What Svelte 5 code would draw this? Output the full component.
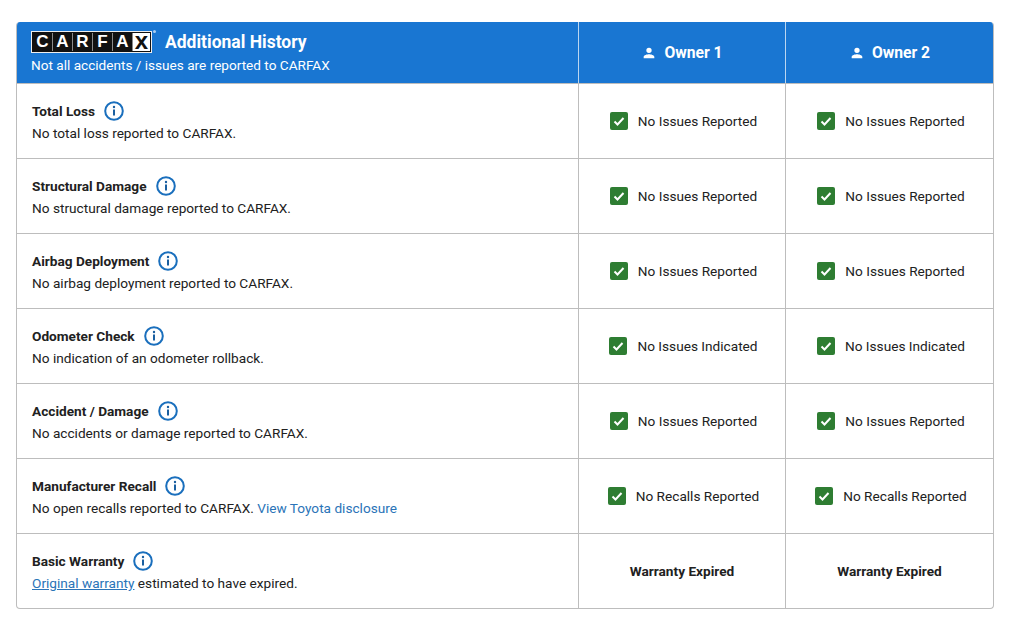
<script>
  const owners = ['Owner 1', 'Owner 2'];
  const rows = [
    { title: 'Total Loss', desc: 'No total loss reported to CARFAX.', status: 'No Issues Reported' },
    { title: 'Structural Damage', desc: 'No structural damage reported to CARFAX.', status: 'No Issues Reported' },
    { title: 'Airbag Deployment', desc: 'No airbag deployment reported to CARFAX.', status: 'No Issues Reported' },
    { title: 'Odometer Check', desc: 'No indication of an odometer rollback.', status: 'No Issues Indicated' },
    { title: 'Accident / Damage', desc: 'No accidents or damage reported to CARFAX.', status: 'No Issues Reported' },
    { title: 'Manufacturer Recall', desc: 'No open recalls reported to CARFAX. ', link: 'View Toyota disclosure', status: 'No Recalls Reported' },
    { title: 'Basic Warranty', lead: 'Original warranty', desc: ' estimated to have expired.', plain: 'Warranty Expired' }
  ];
  const letters = ['C', 'A', 'R', 'F', 'A'];
</script>

<div class="page">
  <div class="table">
    <div class="head first">
      <div class="brand">
        <div class="logo">
          {#each letters as l}<span class="cell">{l}</span>{/each}<span class="x">x</span>
          <i class="reg"></i>
        </div>
        <span class="heading">Additional History</span>
      </div>
      <div class="note">Not all accidents / issues are reported to CARFAX</div>
    </div>
    {#each owners as o}
      <div class="head owner">
        <svg viewBox="0 0 24 24" width="16" height="16" aria-hidden="true"><path fill="#fff" d="M12 12a4 4 0 1 0 0-8 4 4 0 0 0 0 8zm0 2c-2.700 0-8 1.300-8 4v2h16v-2c0-2.700-5.300-4-8-4z"/></svg>
        <span>{o}</span>
      </div>
    {/each}

    {#each rows as r}
      <div class="cellc info">
        <div class="title">
          <span>{r.title}</span>
          <svg viewBox="0 0 20 20" width="20" height="20" aria-hidden="true"><circle cx="10" cy="10" r="8.800" fill="none" stroke="#1a6fbd" stroke-width="2"/><circle cx="10" cy="6" r="1.200" fill="#1a5fa0"/><rect x="9" y="8.500" width="2" height="6" fill="#1a5fa0"/></svg>
        </div>
        <div class="desc">{#if r.lead}<a href="#w" class="under">{r.lead}</a>{/if}{r.desc}{#if r.link}<a href="#d">{r.link}</a>{/if}</div>
      </div>
      {#each owners as _}
        <div class="cellc stat">
          {#if r.plain}
            <strong>{r.plain}</strong>
          {:else}
            <svg class="check" viewBox="0 0 18 18" width="18" height="18" aria-hidden="true"><rect width="18" height="18" rx="2" fill="#2e7d32"/><path d="M4.500 9.500l3 3 6-6.500" fill="none" stroke="#fff" stroke-width="2"/></svg>
            <span>{r.status}</span>
          {/if}
        </div>
      {/each}
    {/each}
  </div>
</div>

<style>
  :global(body) { margin: 0; background: #fff; }
  .page { padding: 22px 30px 0 16px; font-family: Roboto, "Liberation Sans", sans-serif; color: #212121; }
  .table {
    width: 978px; box-sizing: border-box; display: grid;
    grid-template-columns: 561px 207px 208px;
    grid-template-rows: 61px repeat(7, 75px);
    border: 1px solid #bdbdbd; border-top: 0; border-radius: 4px; overflow: hidden;
  }
  .head { background: #1976d2; color: #fff; box-sizing: border-box; }
  .head.first { padding: 8px 0 0 15px; margin-left: -1px; }
  .brand { display: flex; align-items: center; gap: 13px; height: 24px; }
  .logo {
    position: relative; display: flex; align-items: stretch; box-sizing: border-box;
    width: 121px; height: 22px; background: #111; border: 1px solid #eee; padding: 1px;
  }
  .cell {
    width: 20px; box-sizing: border-box; border-right: 1px solid #8a8a8a; color: #fff;
    font: 700 17px/18px "Liberation Sans", sans-serif; text-align: center;
  }
  .x { flex: 1; background: #fff; color: #111; font: 700 24px/16px "Liberation Sans", sans-serif; text-align: center; }
  .reg { position: absolute; right: -5px; top: -2px; width: 3px; height: 3px; border-radius: 50%; background: #a9cdf0; }
  .heading { font-size: 17.500px; font-weight: 700; line-height: 24px; }
  .note { font-size: 13.600px; line-height: 20px; margin-top: 1px; }
  .owner {
    display: flex; align-items: center; justify-content: center; gap: 7px;
    font-size: 15.700px; font-weight: 700; border-left: 1px solid #bbd6f0;
  }
  .cellc { box-sizing: border-box; border-top: 1px solid #bdbdbd; }
  .info { padding: 17px 0 0 15px; }
  .title { display: flex; align-items: center; gap: 9px; font-size: 13.650px; font-weight: 700; line-height: 20px; }
  .desc { font-size: 13.650px; line-height: 20px; margin-top: 2px; }
  a { color: #2b74b8; text-decoration: none; }
  a.under { text-decoration: underline; }
  .stat {
    display: flex; align-items: center; justify-content: center; gap: 10px;
    font-size: 13.650px; border-left: 1px solid #bdbdbd;
  }
  .stat strong { font-weight: 700; }
  .check { flex: none; margin-left: 3px; }
</style>
